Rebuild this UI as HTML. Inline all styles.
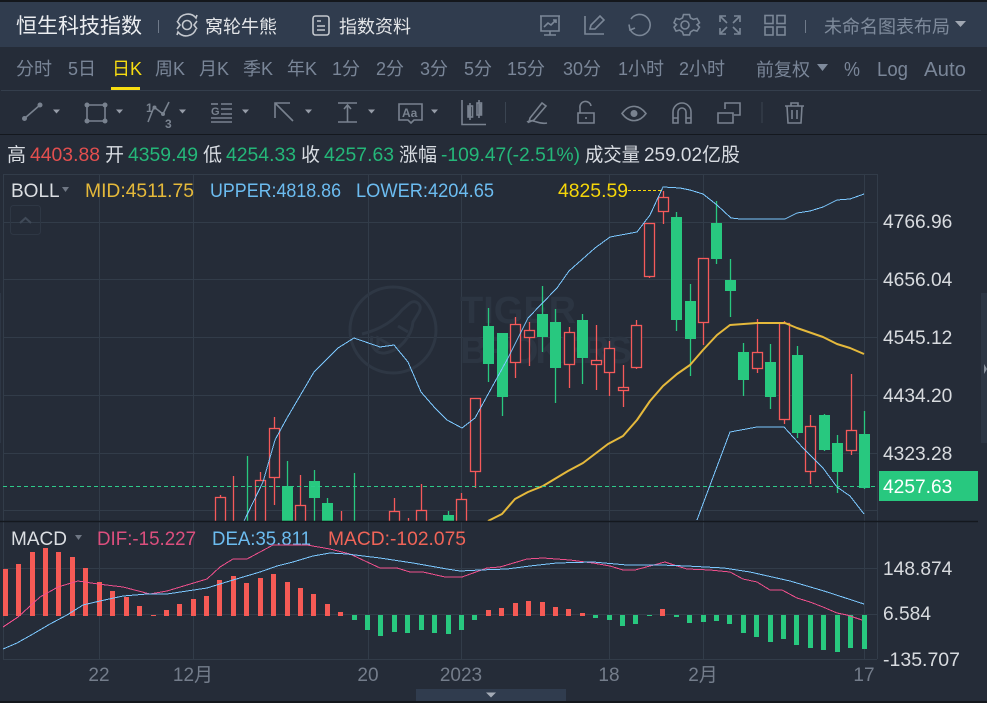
<!DOCTYPE html>
<html lang="zh"><head><meta charset="utf-8"><title>恒生科技指数</title>
<style>
html,body{margin:0;padding:0;background:#252c38;width:987px;height:703px;overflow:hidden}
svg{display:block;font-family:"Liberation Sans","Noto Sans CJK SC",sans-serif}
.tab{font-size:18px;fill:#7a8698}
.ax{font-size:19.200px;fill:#d8dbdf}
.inf{font-size:19px;fill:#d8dce2}
.t{font-size:19px;fill:#747d8b;text-anchor:middle}
.ic{fill:none;stroke:#79828f;stroke-width:1.600}
.tp{fill:none;stroke:#7b8797;stroke-width:1.600}
.tri{fill:#969da8}
</style></head><body>
<svg width="987" height="703" viewBox="0 0 987 703" xmlns="http://www.w3.org/2000/svg">
<rect width="987" height="703" fill="#252c38"/>
<rect width="987" height="2" fill="#14171c"/>
<rect y="2" width="987" height="45" fill="#303c4e"/>
<rect y="134" width="987" height="1" fill="#14181e"/>
<rect y="701" width="987" height="2" fill="#14171c"/>
<path d="M1 90.500H981" stroke="#343e4c"/>

<!-- header -->
<text x="16" y="33" font-size="21" fill="#eceef1">恒生科技指数</text>
<path d="M158.500 20V33" stroke="#6f7a8a"/>
<g fill="none" stroke="#c4c8ce" stroke-width="1.600">
<path d="M178 21A10.500 10.500 0 0 1 196 18L197 15M196 29A10.500 10.500 0 0 1 178 32L177 35"/>
<path d="M177 21L180 25L177 29M197 21L194 25L197 29"/>
<circle cx="187" cy="25" r="4.500"/>
</g>
<text x="205" y="33" font-size="18" fill="#e3e5e8">窝轮牛熊</text>
<g fill="none" stroke="#c4c8ce" stroke-width="1.600">
<rect x="313" y="16" width="16" height="19" rx="2.500"/>
<path d="M317 21H321M317 26H325M317 30H325"/>
</g>
<text x="339" y="33" font-size="18" fill="#e3e5e8">指数资料</text>

<g class="tp">
<path d="M540 16H560M541 16V31H559V16M550 31V35M544 35H556"/>
<path d="M544 27L548 23L551 25L556 20M553 20H556V23"/>
<path d="M585 16V34H604"/>
<path d="M590 29L591 25L600 16L604 20L595 29Z"/>
<path d="M630 29A10.500 10.500 0 1 0 631 19M629 24.500L630 30L635 28"/>
<path d="M682 15H688L689 18.500L692 20L695.500 19L698 23.500L695.500 25.500L698 28L695.500 32L692 31L689 33L688 36H682L681 33L678 31L674.500 32L672.500 28L675 25.500L672.500 23.500L674.500 19L678 20L681 18.500Z" transform="translate(1.500 0) scale(1 .97)"/>
<circle cx="685" cy="25" r="4"/>
<path d="M720 22V16H726M740 22V16H734M720 28V34H726M740 28V34H734M721 17L727 23M739 17L733 23M721 33L727 27M739 33L733 27"/>
<rect x="765" y="15.500" width="8" height="8"/><rect x="777" y="15.500" width="8" height="8"/><rect x="765" y="27" width="8" height="8"/><rect x="777" y="27" width="8" height="8"/>
</g>
<path d="M805.500 20V33" stroke="#6f7a8a"/>
<text x="824" y="33" font-size="18" fill="#7f8b9c">未命名图表布局</text>
<path d="M955 21H966L960.500 27Z" fill="#a0a7b2"/>

<!-- tabs -->
<g class="tab">
<text x="16" y="75">分时</text><text x="68" y="75">5日</text>
<text x="155" y="75">周K</text><text x="199" y="75">月K</text><text x="243" y="75">季K</text><text x="287" y="75">年K</text>
<text x="332" y="75">1分</text><text x="376" y="75">2分</text><text x="420" y="75">3分</text><text x="464" y="75">5分</text>
<text x="507" y="75">15分</text><text x="563" y="75">30分</text><text x="618" y="75">1小时</text><text x="679" y="75">2小时</text>
<text x="756" y="76">前复权</text>
<text x="844" y="76" font-size="20" textLength="16" lengthAdjust="spacingAndGlyphs">%</text>
<text x="877" y="76" font-size="20" textLength="31" lengthAdjust="spacingAndGlyphs">Log</text>
<text x="924" y="76" font-size="20" textLength="42" lengthAdjust="spacingAndGlyphs">Auto</text>
</g>
<text x="112" y="75" font-size="18" fill="#f7dc11">日K</text>
<rect x="111" y="87" width="29" height="3" fill="#f7dc11"/>
<path d="M817 64H828L822.500 71Z" fill="#7f8b9c"/>

<!-- toolbar -->
<g class="ic">
<path d="M25 118L40 105"/>
<path d="M87 105H105V121H87Z"/>
<path d="M148 122L154 107L163 114L169 102"/>
<path d="M221 104H232M221 109H232M221 114H232M211 118H232M211 122H232"/>
<path d="M211 104H218"/>
<path d="M293 121L275 103M275 118V103H290"/>
<path d="M338 103H357M338 122H357M347.500 106V122M344 109L347.500 105L351 109"/>
<path d="M399 104H422V120H414L411 123L408 120H399Z"/>
<path d="M462 100V124.500H486"/>
<rect x="468" y="106" width="4.500" height="11"/><rect x="477" y="103" width="4.500" height="12"/>
<path d="M470 103V120M479 100V118"/>
<path d="M530 118L542 103L546 106L534 120L529 122ZM527 122C533 118 538 125 547 123"/>
<path d="M578 113H594V123H578ZM580 113V108A5.500 5.500 0 0 1 591 106"/>
<path d="M586 117V119"/>
<path d="M622 113.500C629 104 639 104 646 113.500C639 123 629 123 622 113.500Z"/>
<path d="M673 123V112A9 9 0 0 1 691 112V123H686V112A4 4 0 0 0 678 112V123ZM673 118H678M686 118H691"/>
<path d="M725 109V103H740V115H734M718 113H733V123H718Z"/>
<path d="M785 106H804M791 106V103H798V106M787 106L788 123H801L802 106M792 110V119M797 110V119"/>
</g>
<g fill="#79828f">
<circle cx="24.500" cy="118.500" r="2.500"/><circle cx="40" cy="105" r="2.500"/>
<circle cx="87" cy="105" r="2.500"/><circle cx="105" cy="105" r="2.500"/><circle cx="87" cy="121" r="2.500"/><circle cx="105" cy="121" r="2.500"/>
<circle cx="154.500" cy="107.500" r="2"/><circle cx="163" cy="114" r="2"/>
<circle cx="634" cy="113.500" r="3.500"/>
<path d="M479 104h3v11h-3zM468 107h3v10h-3z"/>
<text x="146" y="112" font-size="12" font-weight="bold">1</text>
<text x="165" y="128" font-size="12" font-weight="bold">3</text>
<text x="211" y="115" font-size="11" font-weight="bold">G</text>
<text x="402" y="117" font-size="12" font-weight="bold">Aa</text>
</g>
<path d="M505.500 102V123M762 102V123" stroke="#3a4451"/>
<g class="tri">
<path d="M53 109.500H60L56.500 113.500ZM116 109.500H123L119.500 113.500ZM179 109.500H186L182.500 113.500ZM242 109.500H249L245.500 113.500ZM305 109.500H312L308.500 113.500ZM368 109.500H375L371.500 113.500ZM431 109.500H438L434.500 113.500Z"/>
</g>

<!-- info row -->
<g class="inf">
<text x="7" y="161">高</text><text x="30" y="161" fill="#e34f4f" textLength="70" lengthAdjust="spacingAndGlyphs">4403.88</text>
<text x="105" y="161">开</text><text x="128" y="161" fill="#24b779" textLength="70" lengthAdjust="spacingAndGlyphs">4359.49</text>
<text x="203" y="161">低</text><text x="226" y="161" fill="#24b779" textLength="70" lengthAdjust="spacingAndGlyphs">4254.33</text>
<text x="301" y="161">收</text><text x="324" y="161" fill="#24b779" textLength="70" lengthAdjust="spacingAndGlyphs">4257.63</text>
<text x="399" y="161">涨幅</text><text x="441" y="161" fill="#24b779" textLength="139" lengthAdjust="spacingAndGlyphs">-109.47(-2.51%)</text>
<text x="585" y="161" textLength="55" lengthAdjust="spacingAndGlyphs">成交量</text><text x="644" y="161" textLength="96" lengthAdjust="spacingAndGlyphs">259.02亿股</text>
</g>

<!-- grid -->
<g stroke="#323c49" fill="none">
<path d="M3.500 174V522M99.500 174V659M193.500 174V659M368.500 174V659M461.500 174V659M609.500 174V659M703.500 174V659M864.500 174V659M877.500 174V659M3.500 522V659"/>
<path d="M3 174.500H877M3 222.500H877M3 279.500H877M3 337.500H877M3 395.500H877M3 453.500H877M3 510.500H877M3 568.500H877M3 614.500H877M3 659.500H877"/>
</g>

<!-- watermark -->
<g fill="none" stroke="#2e3744" stroke-width="3">
<circle cx="393" cy="330" r="43"/>
<path d="M362 334C378 330 392 323 402 310L410 303C416 299 423 305 419 312L413 322C412 334 402 350 385 353C374 354 370 344 372 336"/>
<path d="M378 350V338L392 346M398 326L408 332"/>
</g>
<g fill="#2c3542" font-weight="bold" font-size="38">
<text x="460" y="323">TIGER</text>
<text x="460" y="363" textLength="172">BROKERS</text>
</g>

<!-- collapse -->
<rect x="10.500" y="205.500" width="30" height="29" rx="3" fill="none" stroke="#2e3744"/>
<path d="M20 223L25.500 218L31 223" fill="none" stroke="#404a58" stroke-width="2"/>

<!-- candles -->
<svg x="0" y="0" width="987" height="521" viewBox="0 0 987 521">
<path fill="none" stroke="#f55a5a" stroke-width="1.300" d="M220.500 495V521M233.500 476V521M260.500 472V521M274.500 417V505M300.500 475V521M341.500 511V521M394.500 498V521M408.500 518V521M421.500 484V521M461.500 493V521M475.500 398V488M515.500 317V378M529.500 322V366M569.500 327V388M596.500 325V390M609.500 341V396M623.500 365V407M636.500 320V369M649.500 223V278M663.500 191V224M703.500 258V345M757.500 319V373M784.500 321V424M810.500 415V484M851.500 374V455"/>
<path fill="none" stroke="#28c87f" stroke-width="1.300" d="M247.500 456V521M287.500 461V521M314.500 470V521M327.500 498V521M354.500 473V521M448.500 511V521M488.500 308V382M502.500 333V416M542.500 286V352M555.500 309V403M582.500 314V384M676.500 212V331M690.500 284V376M716.500 201V264M730.500 259V317M743.500 343V396M770.500 344V409M797.500 346V438M824.500 414V451M837.500 435V493M864.500 411V489"/>
<g fill="#252c38" stroke="#f55a5a" stroke-width="1.300">
<rect x="215.500" y="497.500" width="10" height="30"/>
<rect x="255.500" y="480.500" width="10" height="50"/>
<rect x="269.500" y="428.500" width="10" height="49"/>
<rect x="295.500" y="505.500" width="10" height="30"/>
<rect x="389.500" y="511.500" width="10" height="30"/>
<rect x="416.500" y="510.500" width="10" height="30"/>
<rect x="456.500" y="499.500" width="10" height="30"/>
<rect x="470.500" y="398.500" width="10" height="73"/>
<rect x="510.500" y="324.500" width="10" height="38"/>
<rect x="524.500" y="330.500" width="10" height="7"/>
<rect x="564.500" y="332.500" width="10" height="32"/>
<rect x="591.500" y="360.500" width="10" height="4"/>
<rect x="604.500" y="348.500" width="10" height="24"/>
<rect x="618.500" y="387.500" width="10" height="3"/>
<rect x="631.500" y="325.500" width="10" height="42"/>
<rect x="644.500" y="223.500" width="10" height="53"/>
<rect x="658.500" y="197.500" width="10" height="14"/>
<rect x="698.500" y="258.500" width="10" height="64"/>
<rect x="752.500" y="352.500" width="10" height="16"/>
<rect x="779.500" y="323.500" width="10" height="96"/>
<rect x="805.500" y="426.500" width="10" height="45"/>
<rect x="846.500" y="430.500" width="10" height="20"/>
</g>
<g fill="#28c87f">
<rect x="282" y="486" width="11" height="35"/>
<rect x="309" y="481" width="11" height="17"/>
<rect x="322" y="503" width="11" height="18"/>
<rect x="443" y="515" width="11" height="6"/>
<rect x="483" y="326" width="11" height="38"/>
<rect x="497" y="333" width="11" height="64"/>
<rect x="537" y="314" width="11" height="23"/>
<rect x="550" y="322" width="11" height="46"/>
<rect x="577" y="320" width="11" height="38"/>
<rect x="671" y="217" width="11" height="103"/>
<rect x="685" y="301" width="11" height="38"/>
<rect x="711" y="223" width="11" height="36"/>
<rect x="725" y="280" width="11" height="11"/>
<rect x="738" y="352" width="11" height="28"/>
<rect x="765" y="362" width="11" height="35"/>
<rect x="792" y="355" width="11" height="78"/>
<rect x="819" y="415" width="11" height="35"/>
<rect x="832" y="443" width="11" height="29"/>
<rect x="859" y="434" width="11" height="54"/>
</g>
<g fill="none" stroke-linejoin="round">
<path stroke="#7cc8ff" stroke-width="1" shape-rendering="crispEdges" d="M244 521L263 482L275 440L287 418L314 372L338 348L354 338L380 347L394 345L408 362L421 392L435 408L447 420L462 428L475 418L497 378L508 358L528 318L557 288L569 271L595 248L610 237L637 232L650 215L663 187L680 188L690 190L703 194L717 205L731 218L740 219L785 219L797 213L810 211L823 207L837 200L850 199L864 194"/>
<path stroke="#7cc8ff" stroke-width="1" shape-rendering="crispEdges" d="M697 520L730 432L757 427L784 427L803 448L823 468L837 487L850 496L864 514"/>
<path stroke="#e5b93c" stroke-width="2" d="M488 521L502 514L515 499L528 492L543 486L568 471L583 463L608 444L623 436L637 420L650 401L663 386L677 374L690 365L703 350L717 335L730 325L757 323L785 323L797 328L823 337L837 344L850 348L864 354"/>
</g>
</svg>
<path d="M3 486.500H877" stroke="#2ecb8a" stroke-dasharray="4 3"/>
<path d="M0 521.500H978" stroke="#14181e" stroke-width="1.500"/>
<path d="M628 190.500H663" stroke="#f5d60a" stroke-dasharray="3 2"/>

<!-- indicators -->
<text x="11" y="197" font-size="19" fill="#dcdfe3">BOLL</text>
<path d="M62 187H69L65.500 192Z" fill="#6f7784"/>
<g font-size="19">
<text x="85" y="197" fill="#e5b93a" textLength="109" lengthAdjust="spacingAndGlyphs">MID:4511.75</text>
<text x="210" y="197" fill="#6cbcf0" textLength="131" lengthAdjust="spacingAndGlyphs">UPPER:4818.86</text>
<text x="356" y="197" fill="#6cbcf0" textLength="138" lengthAdjust="spacingAndGlyphs">LOWER:4204.65</text>
<text x="558" y="197" fill="#f5d60a" textLength="70" lengthAdjust="spacingAndGlyphs">4825.59</text>
</g>
<text x="11" y="545" font-size="19" fill="#dcdfe3">MACD</text>
<path d="M75 535H82L78.500 540Z" fill="#6f7784"/>
<g font-size="19">
<text x="97" y="545" fill="#dc4f7e" textLength="99" lengthAdjust="spacingAndGlyphs">DIF:-15.227</text>
<text x="212" y="545" fill="#6cbcf0" textLength="99" lengthAdjust="spacingAndGlyphs">DEA:35.811</text>
<text x="328" y="545" fill="#f06458" textLength="138" lengthAdjust="spacingAndGlyphs">MACD:-102.075</text>
</g>

<!-- axis labels -->
<g class="ax">
<text x="883" y="228">4766.96</text><text x="883" y="286">4656.04</text><text x="883" y="344">4545.12</text>
<text x="883" y="402">4434.20</text><text x="883" y="460">4323.28</text>
</g>
<rect x="879" y="471" width="99" height="30" fill="#28c87f"/>
<text x="883" y="493" class="ax" style="fill:#fff">4257.63</text>
<g class="ax">
<text x="883" y="575">148.874</text><text x="883" y="620">6.584</text><text x="883" y="666" textLength="77" lengthAdjust="spacingAndGlyphs">-135.707</text>
</g>

<!-- MACD bars -->
<g fill="#f55a55">
<rect x="3" y="569" width="5" height="47"/><rect x="16" y="564" width="5" height="52"/><rect x="30" y="552" width="5" height="64"/><rect x="43" y="548" width="5" height="68"/><rect x="56" y="552" width="5" height="64"/><rect x="70" y="557" width="5" height="59"/><rect x="83" y="568" width="5" height="48"/><rect x="97" y="582" width="5" height="34"/><rect x="110" y="591" width="5" height="25"/><rect x="124" y="597" width="5" height="19"/><rect x="137" y="606" width="5" height="10"/><rect x="151" y="615" width="5" height="1"/><rect x="164" y="610" width="5" height="6"/><rect x="177" y="604" width="5" height="12"/><rect x="191" y="599" width="5" height="17"/><rect x="204" y="596" width="5" height="20"/><rect x="217" y="580" width="5" height="36"/><rect x="231" y="576" width="5" height="40"/><rect x="244" y="583" width="5" height="33"/><rect x="258" y="578" width="5" height="38"/><rect x="271" y="574" width="5" height="42"/><rect x="285" y="582" width="5" height="34"/><rect x="298" y="588" width="5" height="28"/><rect x="311" y="594" width="5" height="22"/><rect x="325" y="604" width="5" height="12"/><rect x="338" y="612" width="5" height="4"/>
<rect x="486" y="610" width="5" height="6"/><rect x="499" y="608" width="5" height="8"/><rect x="513" y="603" width="5" height="13"/><rect x="526" y="601" width="5" height="15"/><rect x="540" y="602" width="5" height="14"/><rect x="553" y="607" width="5" height="9"/><rect x="566" y="609" width="5" height="7"/><rect x="580" y="613" width="5" height="3"/><rect x="660" y="609" width="5" height="7"/>
</g>
<g fill="#28c87f">
<rect x="352" y="615" width="5" height="5"/><rect x="365" y="615" width="5" height="15"/><rect x="378" y="615" width="5" height="21"/><rect x="392" y="615" width="5" height="17"/><rect x="405" y="615" width="5" height="18"/><rect x="419" y="615" width="5" height="15"/><rect x="432" y="615" width="5" height="18"/><rect x="446" y="615" width="5" height="19"/><rect x="459" y="615" width="5" height="15"/><rect x="472" y="615" width="5" height="5"/>
<rect x="593" y="615" width="5" height="3"/><rect x="607" y="615" width="5" height="5"/><rect x="620" y="615" width="5" height="11"/><rect x="633" y="615" width="5" height="9"/><rect x="647" y="615" width="5" height="1"/>
<rect x="674" y="615" width="5" height="2"/><rect x="687" y="615" width="5" height="8"/><rect x="701" y="615" width="5" height="7"/><rect x="714" y="615" width="5" height="6"/><rect x="727" y="615" width="5" height="9"/><rect x="741" y="615" width="5" height="18"/><rect x="754" y="615" width="5" height="22"/><rect x="768" y="615" width="5" height="27"/><rect x="781" y="615" width="5" height="24"/><rect x="794" y="615" width="5" height="30"/><rect x="808" y="615" width="5" height="33"/><rect x="821" y="615" width="5" height="35"/><rect x="835" y="615" width="5" height="37"/><rect x="848" y="615" width="5" height="33"/><rect x="862" y="615" width="5" height="34"/>
</g>
<g fill="none" shape-rendering="crispEdges">
<path stroke="#ee4f8c" stroke-width="1" d="M3 627L18 617L40 597L58 587L78 581L98 584L123 587L150 594L167 591L207 579L220 567L233 559L247 559L273 545L307 545L330 549L350 554L380 568L397 568L410 572L423 572L445 577L462 577L487 568L500 567L527 559L543 558L570 560L593 563L610 566L623 570L635 570L650 566L665 562L677 566L687 569L710 570L730 572L743 579L757 582L770 590L782 590L797 598L810 602L823 607L837 613L847 615L862 620"/>
<path stroke="#7cc8ff" stroke-width="1" d="M3 649L17 643L33 634L50 624L67 615L83 605L100 601L123 596L147 594L167 594L187 591L207 588L233 580L260 572L277 566L293 562L313 556L330 553L347 554L380 558L413 563L447 569L460 571L480 570L507 569L530 566L557 563L593 562L627 565L660 565L687 566L724 568L750 572L790 581L824 591L864 604"/>
</g>

<!-- time axis -->
<text x="99" y="681" class="t">22</text><text x="193" y="681" class="t">12月</text><text x="368" y="681" class="t">20</text>
<text x="461" y="681" class="t">2023</text><text x="609" y="681" class="t">18</text><text x="703" y="681" class="t">2月</text><text x="864" y="681" class="t">17</text>

<!-- handles -->
<rect x="416" y="689" width="150" height="12" fill="#303c4e"/>
<path d="M486 692.500H496L491 697.500Z" fill="#a4abb6"/>
<rect x="981" y="293" width="6" height="150" fill="#2d3644"/>
<path d="M984 364V374L987 369Z" fill="#8a929e"/>
<rect x="0" y="293" width="1" height="150" fill="#2d3644"/>
</svg>
</body></html>
